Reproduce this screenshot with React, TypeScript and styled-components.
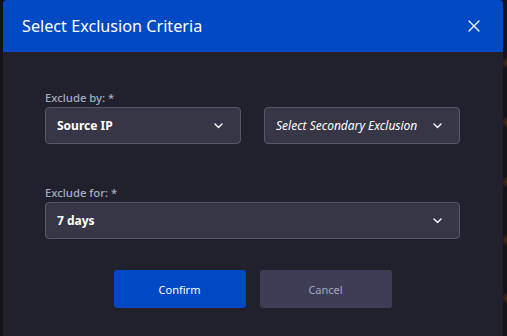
import React from "react";
import styled, { createGlobalStyle } from "styled-components";

const GlobalStyle = createGlobalStyle`
  html, body {
    margin: 0;
    padding: 0;
    height: 100%;
    overflow: hidden;
  }
  body {
    background-color: #131318;
    background-image:
      radial-gradient(circle at 507px 63px, rgba(150, 70, 20, 0.55) 0, rgba(150, 70, 20, 0) 6px),
      radial-gradient(circle at 507px 122px, rgba(150, 70, 20, 0.55) 0, rgba(150, 70, 20, 0) 6px),
      radial-gradient(circle at 507px 182px, rgba(150, 70, 20, 0.55) 0, rgba(150, 70, 20, 0) 6px),
      radial-gradient(circle at 507px 240px, rgba(150, 70, 20, 0.55) 0, rgba(150, 70, 20, 0) 6px),
      radial-gradient(circle at 507px 298px, rgba(150, 70, 20, 0.55) 0, rgba(150, 70, 20, 0) 6px);
    font-family: "Noto Sans", "Open Sans", sans-serif;
  }
`;

const Backdrop = styled.div`
  display: flex;
  padding-left: 3px;
  height: 336px;
`;

const Dialog = styled.div`
  width: 500px;
  min-height: 340px;
  background: #21212e;
  border-radius: 4px 4px 0 0;
  display: flex;
  flex-direction: column;
`;

const Header = styled.div`
  height: 52px;
  background: #0049c5;
  border-radius: 4px 4px 0 0;
  display: flex;
  align-items: center;
  justify-content: space-between;
  padding: 0 22px 0 19px;
`;

const Title = styled.h2`
  margin: 0;
  color: #ffffff;
  font-size: 16.2px;
  font-weight: 400;
  line-height: 24px;
`;

const CloseButton = styled.button`
  width: 14px;
  height: 14px;
  padding: 0;
  border: none;
  background: transparent;
  display: flex;
  align-items: center;
  justify-content: center;
  cursor: pointer;
`;

const Body = styled.div`
  padding: 38px 43px 0 42px;
  display: flex;
  flex-direction: column;
`;

const Row = styled.div<{ $cols: number }>`
  display: grid;
  grid-template-columns: repeat(${(p) => p.$cols}, 1fr);
  column-gap: 23px;
  align-items: end;
  margin-bottom: ${(p) => (p.$cols > 1 ? "41px" : "31px")};
`;

const Field = styled.div`
  display: flex;
  flex-direction: column;
`;

const Label = styled.label`
  color: #a3aec2;
  font-size: 11.3px;
  font-weight: 500;
  line-height: 16px;
  margin-bottom: 1px;
`;

const Select = styled.div`
  height: 37px;
  box-sizing: border-box;
  background: #363646;
  border: 1px solid #56566b;
  border-radius: 4px;
  display: flex;
  align-items: center;
  justify-content: space-between;
  padding: 0 17px 0 11px;
`;

const Value = styled.span<{ $placeholder?: boolean }>`
  color: #ffffff;
  font-size: 12px;
  font-weight: ${(p) => (p.$placeholder ? 400 : 700)};
  font-style: ${(p) => (p.$placeholder ? "italic" : "normal")};
`;

const Actions = styled.div`
  display: flex;
  justify-content: center;
  gap: 14px;
`;

const Button = styled.button<{ $primary?: boolean }>`
  width: 132px;
  height: 38px;
  border: none;
  border-radius: 3px;
  background: ${(p) => (p.$primary ? "#0049c5" : "#3e3d56")};
  color: ${(p) => (p.$primary ? "#ffffff" : "#a7a6bb")};
  font-family: "Noto Sans", "Open Sans", sans-serif;
  font-size: 11px;
  font-weight: 400;
  cursor: pointer;
`;

const Chevron = () => (
  <svg width="9" height="6" viewBox="0 0 9 6" fill="none">
    <polyline points="1,1 4.5,4.5 8,1" stroke="#ffffff" strokeWidth="1.4" strokeLinecap="round" strokeLinejoin="round" />
  </svg>
);

const CloseIcon = () => (
  <svg width="12" height="12" viewBox="0 0 12 12" fill="none">
    <path d="M1 1 L11 11 M11 1 L1 11" stroke="#ffffff" strokeWidth="1.3" strokeLinecap="round" />
  </svg>
);

export default function App() {
  return (
    <>
      <GlobalStyle />
      <Backdrop>
        <Dialog>
          <Header>
            <Title>Select Exclusion Criteria</Title>
            <CloseButton aria-label="Close">
              <CloseIcon />
            </CloseButton>
          </Header>
          <Body>
            <Row $cols={2}>
              <Field>
                <Label>Exclude by: *</Label>
                <Select>
                  <Value>Source IP</Value>
                  <Chevron />
                </Select>
              </Field>
              <Field>
                <Select>
                  <Value $placeholder>Select Secondary Exclusion</Value>
                  <Chevron />
                </Select>
              </Field>
            </Row>
            <Row $cols={1}>
              <Field>
                <Label>Exclude for: *</Label>
                <Select>
                  <Value>7 days</Value>
                  <Chevron />
                </Select>
              </Field>
            </Row>
            <Actions>
              <Button $primary>Confirm</Button>
              <Button>Cancel</Button>
            </Actions>
          </Body>
        </Dialog>
      </Backdrop>
    </>
  );
}
